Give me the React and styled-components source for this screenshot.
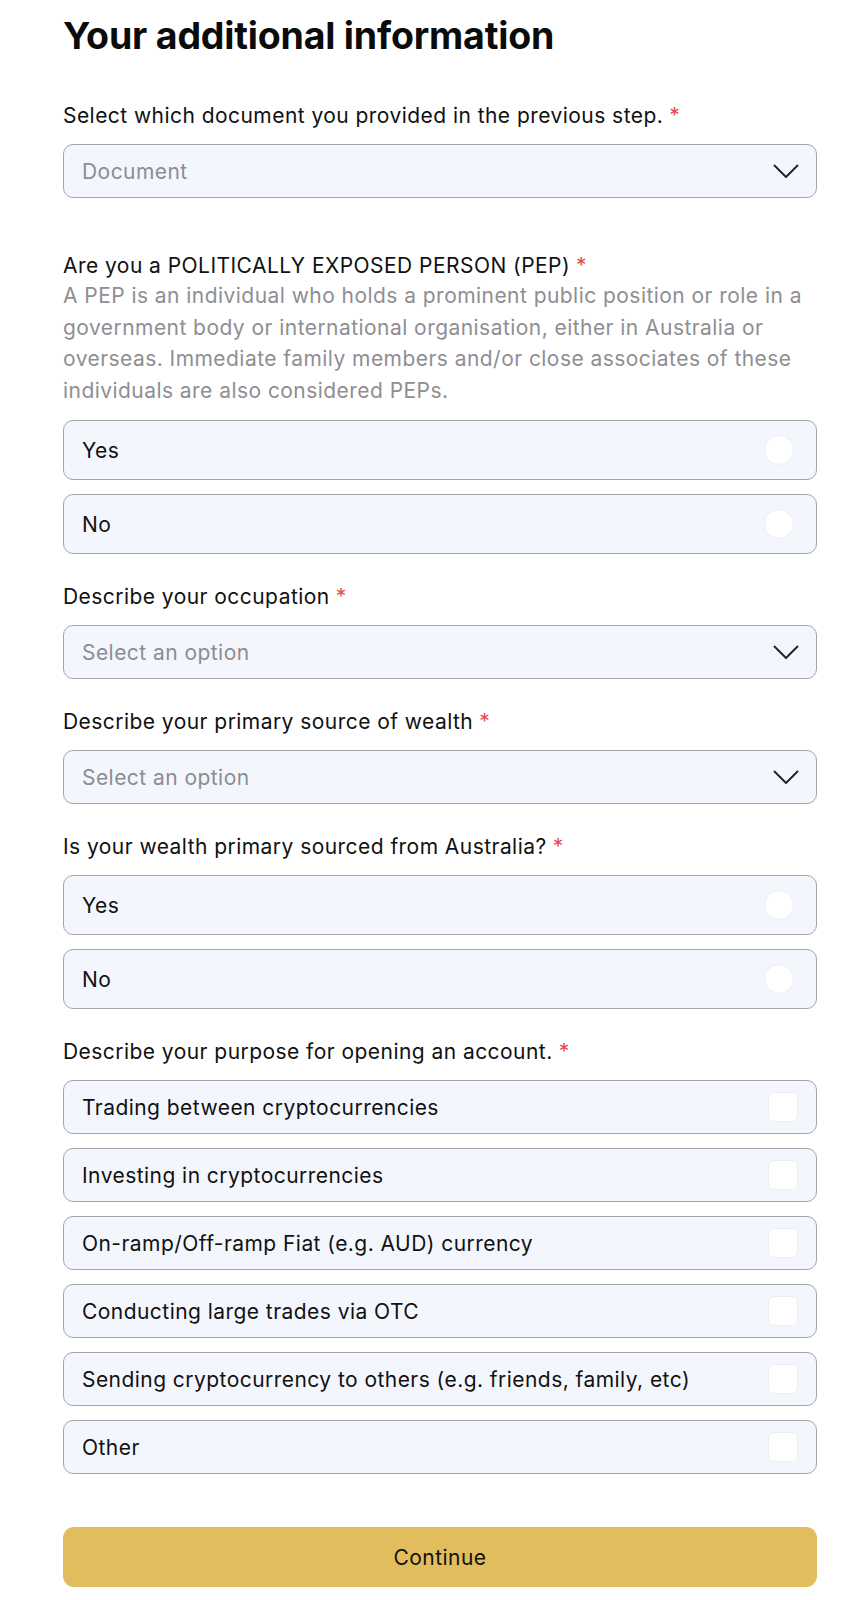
import React from "react";
import styled, { createGlobalStyle } from "styled-components";

const GlobalStyle = createGlobalStyle`
  html, body { margin: 0; padding: 0; background: #ffffff; }
  body { font-family: Inter, "Noto Sans", sans-serif; color: #111111; }
  * { box-sizing: border-box; }
`;

const Page = styled.main`
  width: 754px;
  margin-left: 63px;
  padding-top: 12px;
  padding-bottom: 14px;
  display: flex;
  flex-direction: column;
`;

const Title = styled.h1`
  margin: 0 0 42px 0;
  font-size: 37.5px;
  line-height: 48px;
  font-weight: 700;
  letter-spacing: -0.2px;
  color: #0b0b0b;
`;

const Field = styled.section`
  display: flex;
  flex-direction: column;
  margin-bottom: ${(p) => p.$mb ?? 29}px;
`;

const Label = styled.div`
  font-size: 21px;
  line-height: 28px;
  letter-spacing: 0.45px;
  color: #111111;
  margin-bottom: ${(p) => (p.$tight ? 0 : 14)}px;
`;

const Star = styled.span`
  color: #e5484d;
  margin-left: 6px;
`;

const Hint = styled.p`
  margin: 0 0 14px 0;
  font-size: 21px;
  line-height: 31.5px;
  letter-spacing: 0.45px;
  color: #8e8e93;
`;

const Select = styled.div`
  height: 54px;
  border: 1px solid #a3a5ab;
  border-radius: 10px;
  background: #f4f6fd;
  display: flex;
  align-items: center;
  justify-content: space-between;
  padding: 0 17px 0 18px;
  font-size: 21px;
  letter-spacing: 0.45px;
  color: #8a8d93;
`;

const OptionList = styled.div`
  display: flex;
  flex-direction: column;
  gap: ${(p) => p.$gap}px;
`;

const Option = styled.label`
  height: ${(p) => p.$h}px;
  border: 1px solid #a3a5ab;
  border-radius: 10px;
  background: #f4f6fd;
  display: flex;
  align-items: center;
  justify-content: space-between;
  padding: 0 ${(p) => p.$pr}px 0 18px;
  font-size: 21px;
  letter-spacing: 0.45px;
  color: #111111;
`;

const Radio = styled.span`
  width: 30px;
  height: 30px;
  border-radius: 50%;
  background: #ffffff;
  border: 1px solid #eceef3;
`;

const Check = styled.span`
  width: 30px;
  height: 30px;
  border-radius: 6px;
  background: #ffffff;
  border: 1px solid #eceef3;
`;

const Button = styled.button`
  margin-top: 24px;
  height: 60px;
  width: 100%;
  border: none;
  border-radius: 11px;
  background: #e2bd5e;
  font-family: Inter, "Noto Sans", sans-serif;
  font-size: 21px;
  letter-spacing: 0.45px;
  color: #111111;
`;

const Chevron = () => (
  <svg width="26" height="15" viewBox="0 0 26 15" fill="none">
    <path d="M1.5 1.5 L13 13 L24.5 1.5" stroke="#222" strokeWidth="1.9" strokeLinecap="round" strokeLinejoin="round" />
  </svg>
);

const Req = ({ children, tight }) => (
  <Label $tight={tight}>
    {children}
    <Star>*</Star>
  </Label>
);

const purposes = [
  "Trading between cryptocurrencies",
  "Investing in cryptocurrencies",
  "On-ramp/Off-ramp Fiat (e.g. AUD) currency",
  "Conducting large trades via OTC",
  "Sending cryptocurrency to others (e.g. friends, family, etc)",
  "Other",
];

const YesNo = () => (
  <OptionList $gap={14}>
    <Option $h={60} $pr={22}>
      Yes
      <Radio />
    </Option>
    <Option $h={60} $pr={22}>
      No
      <Radio />
    </Option>
  </OptionList>
);

export default function App() {
  return (
    <>
      <GlobalStyle />
      <Page>
        <Title>Your additional information</Title>

        <Field $mb={54}>
          <Req>Select which document you provided in the previous step.</Req>
          <Select>
            Document
            <Chevron />
          </Select>
        </Field>

        <Field>
          <Req tight>Are you a POLITICALLY EXPOSED PERSON (PEP)</Req>
          <Hint>
            A PEP is an individual who holds a prominent public position or role in a government
            body or international organisation, either in Australia or overseas. Immediate family
            members and/or close associates of these individuals are also considered PEPs.
          </Hint>
          <YesNo />
        </Field>

        <Field>
          <Req>Describe your occupation</Req>
          <Select>
            Select an option
            <Chevron />
          </Select>
        </Field>

        <Field>
          <Req>Describe your primary source of wealth</Req>
          <Select>
            Select an option
            <Chevron />
          </Select>
        </Field>

        <Field>
          <Req>Is your wealth primary sourced from Australia?</Req>
          <YesNo />
        </Field>

        <Field $mb={29}>
          <Req>Describe your purpose for opening an account.</Req>
          <OptionList $gap={14}>
            {purposes.map((p) => (
              <Option key={p} $h={54} $pr={18}>
                {p}
                <Check />
              </Option>
            ))}
          </OptionList>
        </Field>

        <Button>Continue</Button>
      </Page>
    </>
  );
}
